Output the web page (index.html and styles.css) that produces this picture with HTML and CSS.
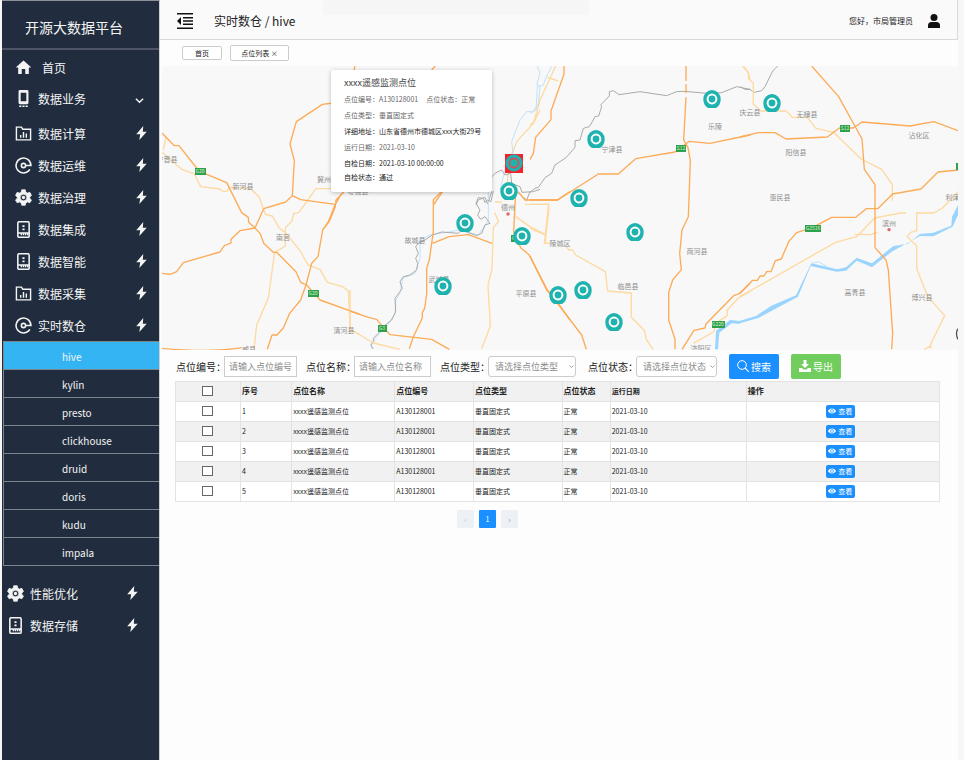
FILE: index.html
```html
<!DOCTYPE html>
<html lang="zh-CN">
<head>
<meta charset="utf-8">
<title>开源大数据平台</title>
<link rel="stylesheet" href="styles.css">
</head>
<body>
<svg class="sprite" aria-hidden="true">
  <symbol id="i-home" viewBox="0 0 24 24"><path d="M9.500 21v-7h5v7h5v-9h3.500L12 2 1 12h3.500v9z"/></symbol>
  <symbol id="i-phone" viewBox="0 0 24 24"><path fill-rule="evenodd" d="M7 0h10a2 2 0 0 1 2 2v16a2 2 0 0 1-2 2H7a2 2 0 0 1-2-2V2a2 2 0 0 1 2-2zM8 4v12h8V4zM6 22h3v2H6zM10.500 22h3v2h-3zM15 22h3v2h-3z"/></symbol>
  <symbol id="i-folder" viewBox="0 0 24 24"><path fill="none" stroke="currentColor" stroke-width="2" d="M2 3h7l2 3h11v15H2z"/><path d="M7 14h2v4H7zM11 10h2v8h-2zM15 12h2v6h-2z"/></symbol>
  <symbol id="i-orbit" viewBox="0 0 24 24"><g fill="none" stroke="currentColor" stroke-width="2.200"><path d="M21 17.500A10.500 10.500 0 1 1 22.500 12H15"/><circle cx="12" cy="12" r="3"/></g></symbol>
  <symbol id="i-gear" viewBox="0 0 24 24"><path stroke="currentColor" stroke-linejoin="round" fill-rule="evenodd" d="M9.500 1h5l.8 3.500 2.200 1.300L21 4.700l2.300 4.300-2.500 2.500v1.500l2.500 2.500L21 19.500l-3.500-1.200-2.200 1.300-.8 3.400h-5l-.8-3.400-2.200-1.300L3 19.500.7 15.500 3.200 13v-1.500L.7 9 3 4.700l3.500 1.100 2.200-1.300zM12 7.500a4.600 4.600 0 1 0 0 9.200 4.600 4.600 0 0 0 0-9.200z"/><circle cx="12" cy="12" r="2.300"/></symbol>
  <symbol id="i-server" viewBox="0 0 24 24"><rect x="4" y="1" width="16" height="22" rx="2" fill="none" stroke="currentColor" stroke-width="2.200"/><path d="M10.500 6h3v2.500h-3zM10.500 10.500h3V13h-3zM4 16h16v2h-1v2h-2v-2h-1v2h-2v-2h-1v2h-2v-2h-1v2H8v-2H4z"/></symbol>
  <symbol id="i-bolt" viewBox="0 0 12 16"><path d="M8 0 0 9.500h4.500L3.500 16 12 6.500H7.500z"/></symbol>
  <symbol id="i-eye" viewBox="0 0 16 12"><path fill-rule="evenodd" d="M8 1c3.500 0 6.500 2 8 5-1.500 3-4.500 5-8 5S1.500 9 0 6c1.500-3 4.500-5 8-5zM8 2.500a3.500 3.500 0 1 0 0 7 3.500 3.500 0 0 0 0-7z"/><circle cx="8" cy="6" r="2"/></symbol>
  <symbol id="i-down" viewBox="0 0 10 10"><path d="M1 3l4 4 4-4" fill="none" stroke="currentColor" stroke-width="1.600"/></symbol>
  <symbol id="pin" viewBox="-10 -10 20 20"><path d="M-4 9C-7 7.500-8.700 4-8.700 0A8.700 8.900 0 0 1 8.700 0C8.700 4 7 7.500 4 9z" fill="#1fb3b0"/><circle r="4.400" fill="none" stroke="#fff" stroke-width="2"/></symbol>
</svg>

<aside class="sidebar">
  <h1 class="brand">开源大数据平台</h1>
  <nav>
    <div class="group group-top">
      <a class="item item-home" href="#"><svg class="icon"><use href="#i-home"/></svg>首页</a>
      <a class="item" href="#"><svg class="icon"><use href="#i-phone"/></svg>数据业务<svg class="chev"><use href="#i-down"/></svg></a>
    </div>
    <div class="group">
      <a class="item" href="#"><svg class="icon"><use href="#i-folder"/></svg>数据计算<svg class="bolt"><use href="#i-bolt"/></svg></a>
      <a class="item" href="#"><svg class="icon"><use href="#i-orbit"/></svg>数据运维<svg class="bolt"><use href="#i-bolt"/></svg></a>
      <a class="item" href="#"><svg class="icon"><use href="#i-gear"/></svg>数据治理<svg class="bolt"><use href="#i-bolt"/></svg></a>
      <a class="item" href="#"><svg class="icon"><use href="#i-server"/></svg>数据集成<svg class="bolt"><use href="#i-bolt"/></svg></a>
      <a class="item" href="#"><svg class="icon"><use href="#i-server"/></svg>数据智能<svg class="bolt"><use href="#i-bolt"/></svg></a>
      <a class="item" href="#"><svg class="icon"><use href="#i-folder"/></svg>数据采集<svg class="bolt"><use href="#i-bolt"/></svg></a>
      <a class="item" href="#"><svg class="icon"><use href="#i-orbit"/></svg>实时数仓<svg class="bolt"><use href="#i-bolt"/></svg></a>
    </div>
    <div class="sub">
      <a class="active" href="#">hive</a><a href="#">kylin</a><a href="#">presto</a><a href="#">clickhouse</a>
      <a href="#">druid</a><a href="#">doris</a><a href="#">kudu</a><a href="#">impala</a>
    </div>
    <div class="group group-end">
      <a class="item" href="#"><svg class="icon"><use href="#i-gear"/></svg>性能优化<svg class="bolt"><use href="#i-bolt"/></svg></a>
      <a class="item" href="#"><svg class="icon"><use href="#i-server"/></svg>数据存储<svg class="bolt"><use href="#i-bolt"/></svg></a>
    </div>
  </nav>
</aside>

<main class="main">
  <header class="topbar">
    <button class="fold" aria-label="收起菜单"><svg viewBox="0 0 16 16"><path d="M0 0h16v1.500H0zM6 4h10v1.500H6zM6 7.200h10v1.500H6zM6 10.500h10V12H6zM0 14.500h16V16H0zM4 4v8L0 8z"/></svg></button>
    <span class="crumb">实时数仓 / hive</span>
    <span class="hello">您好，市局管理员</span>
    <svg class="user" viewBox="0 0 12 14"><circle cx="6" cy="3.500" r="3.500"/><path d="M0 14v-2.500Q0 8 3.500 8h5Q12 8 12 11.500V14z"/></svg>
  </header>
  <div class="tabs"><button>首页</button><button class="tab-open">点位列表 ×</button></div>

  <section class="map">
    <svg class="canvas" viewBox="162 66 796 284" preserveAspectRatio="xMidYMid slice">
      <g class="lines" transform="translate(160 60) scale(.33333)">
        <path class="minor" d="M18 230L10 270M6 277L65 328 103 342 122 380 180 387 188 394 200 394 210 382 272 386 298 412 316 463 337 468 357 503 376 518 421 573 444 615 480 628 502 667 548 680 565 693 571 810 600 824M515 386H468L416 458 401 460 396 483 376 503V558L344 577 325 714 290 795 282 868"/>
        <path class="major" d="M6 219L43 257H57L105 318 120 335 200 368 245 458 265 472 266 487 285 504 300 520 311 550 340 577H350L408 635 422 667 440 675 462 700 480 720 600 763M520 129L487 133 409 185 390 252 403 302 397 407 377 426 311 446 285 504 240 512 213 538V549L193 557 180 576 70 608 50 635 31 643 6 640M397 407L422 419 526 433M552 395L528 420 526 440 508 484 488 510 474 590 455 610 438 675 422 720 389 760 370 804 351 825H336L322 868M545 400L525 435 505 485 488 510M6 865Q150 878 245 863"/>
      </g>
      <g class="lines" transform="translate(320 60) scale(.33333)">
        <path class="major" d="M105 18L102 30M346 18L335 30M340 435L368 395"/>
        <path class="minor" d="M660 150L640 190 590 245 570 300 560 380"/>
        <path class="water" d="M652 18L660 40 650 75 660 80 655 130 640 155 620 155 600 180 575 245 580 290 555 330 540 390"/>
        <path class="border" d="M468 435L475 420 495 412 503 432 515 395 505 388 516 350 525 340 545 330 555 345 572 340 575 370 600 380 606 397 640 395 660 388"/>
      </g>
      <g class="lines" transform="translate(350 190) scale(.33333)">
        <path class="water" d="M415 5V90L400 115 385 135 330 120 240 135 210 150V205L195 250 158 265 150 310 138 330 135 370 110 410 65 455V476"/>
        <path class="border" d="M430 3L423 35 412 30 405 38 400 25 385 23 378 40 390 60 383 75 392 88 405 80 420 100 405 105 395 130 380 137 355 128 335 120 325 130 275 126 245 136 225 150 205 160 197 170 205 190 197 205 203 220 200 240 180 255 160 260 150 275 157 295 135 325 137 365 125 390 100 410 85 430 70 445 72 455 62 465 70 477M540 5L530 30 500 5"/>
        <path class="minor" d="M0 300V417L70 459 150 478M434 68L446 95 430 112 426 235 414 285 421 408 395 476M435 36H455M497 80L540 110 586 134M525 43H596L583 160H600"/>
        <path class="major" d="M0 363L55 382 80 388 98 410 120 434 245 448 298 478M274 5L250 29V125L238 210 230 235V312L224 355 217 368V384L190 440 178 476M248 160L297 140 355 134 426 160M497 5L491 125 512 173 537 194 590 300 625 340 660 390M505 5L525 30H622L660 5"/>
      </g>
      <g class="lines" transform="translate(530 60) scale(.33333)">
        <path class="water" d="M66 18L48 52 40 75 22 80 18 150 0 160"/>
        <path class="border" d="M0 397L15 385 25 382 45 353 65 340 75 315 108 293 135 262V242L150 240 160 205 178 200 188 183 195 170 206 168 215 140 212 135 238 108V95L250 92 267 104 330 95 410 107 440 95 465 94 530 100 575 98 600 88 620 80 660 88"/>
        <path class="minor" d="M77 18L30 120 12 185 0 195M52 52L85 63M640 18L656 40 660 60M0 433H56V455L45 550H56M0 505L45 525M110 560L116 570H128L137 585 226 635 233 693 304 699V772L344 812 349 838 369 868M660 695L625 714 592 750V766L565 785 550 816 490 850"/>
        <path class="major" d="M102 18V42L63 153V179L17 232 10 280 0 298M468 18V63M468 72V100M468 112L461 240 474 263 481 302 475 470 456 510 449 580 454 629 428 660 416 698V780L435 838V868M0 420H83L205 342H265L317 296 435 276 478 244 540 250 660 225M0 588L52 690 155 825 169 868M660 670L630 700 611 707 528 792 525 804 492 811 456 868"/>
      </g>
      <g class="lines" transform="translate(740 60) scale(.33333)">
        <path class="river" d="M654 435V465L638 500 580 529 540 528 455 575 396 622 350 602 318 632 290 635 212 618 174 710 55 774 0 790V782L48 768 94 737 168 706 214 610 292 628 318 622 350 593 396 610 460 558 502 552 540 522 580 518 634 497 636 470z"/>
        <path class="water" d="M214 610L235 605 262 620"/>
        <path class="river" d="M0 783L-30 780-72 812-75 868H-66L-62 818-25 790 0 792z"/>
        <path class="border" d="M0 80L15 88 30 88 42 97 65 92 75 80 98 33 113 18"/>
        <path class="minor" d="M8 18L25 37 26 56 40 70V132L62 153H138L157 172H202L228 205 281 217 363 297 425 328 457 374V422M0 710L285 548 350 530 404 474 440 467 482 459H498M344 523L390 524 412 517M654 395L630 420 608 444 582 459H530V512L512 517 502 530 530 558V625L563 710 614 767 572 853V865M553 868L574 857"/>
        <path class="major" d="M215 18L296 110 366 237 373 328 405 374V563L438 600 445 630 458 820 455 868M0 231L55 218H105L138 237 262 231 298 204H340L366 186 510 198 582 185 654 212M0 700L38 661H52L60 648H72L80 635H93L106 602 124 597 146 545 170 518 217 503 275 472H347L379 446H413L458 402 543 387 594 336 654 330"/>
        <circle class="city" cx="447" cy="509" r="5"/>
        <path d="M654 806Q645 820 654 838" fill="none" stroke="#555" stroke-width="4"/>
      </g>
      <circle class="city" cx="508" cy="214" r="1.700"/>
      <g class="badges">
        <rect x="195" y="168" width="11" height="7"/><rect x="308" y="290" width="11" height="7"/><rect x="378" y="325" width="9" height="7"/><rect x="511" y="235" width="9" height="7"/><rect x="676" y="145" width="10" height="7"/><rect x="840" y="125" width="10" height="7"/><rect x="805" y="225" width="16" height="7"/><rect x="712" y="321" width="13" height="7"/><rect x="956" y="163" width="6" height="7"/>
        <g><text x="200" y="173">G20</text><text x="313" y="295">G20</text><text x="382" y="330">G3</text><text x="515" y="240">G3</text><text x="681" y="150">S12</text><text x="845" y="130">S12</text><text x="813" y="230">G2516</text><text x="718" y="326">G220</text></g>
      </g>
      <g class="places">
        <text x="167" y="162">宁晋县</text><text x="243" y="189">新河县</text><text x="283" y="240">南宫</text><text x="324" y="182">冀州</text><text x="344" y="333">清河县</text><text x="249" y="352">威县</text><text x="358" y="194">枣强县</text><text x="415" y="243">故城县</text><text x="439" y="282">武城县</text><text x="508" y="210">德州</text><text x="526" y="296">平原县</text><text x="560" y="246">陵城区</text><text x="612" y="152">宁津县</text><text x="715" y="129">乐陵</text><text x="750" y="115">庆云县</text><text x="697" y="254">商河县</text><text x="628" y="289">临邑县</text><text x="701" y="351">济阳区</text><text x="807" y="117">无棣县</text><text x="796" y="155">阳信县</text><text x="919" y="138">沾化区</text><text x="780" y="200">惠民县</text><text x="956" y="200">利津县</text><text x="889" y="226">滨州</text><text x="855" y="295">高青县</text><text x="922" y="300">博兴县</text>
      </g>
      <rect x="505" y="154" width="18" height="19" fill="#f5222d"/>
      <g>
        <use href="#pin" x="702" y="89" width="20" height="20"/><use href="#pin" x="762" y="93" width="20" height="20"/><use href="#pin" x="586" y="129" width="20" height="20"/><use href="#pin" x="569" y="188" width="20" height="20"/><use href="#pin" x="625" y="222" width="20" height="20"/><use href="#pin" x="455" y="213" width="20" height="20"/><use href="#pin" x="499" y="181" width="20" height="20"/><use href="#pin" x="512" y="226" width="20" height="20"/><use href="#pin" x="433" y="276" width="20" height="20"/><use href="#pin" x="548" y="285" width="20" height="20"/><use href="#pin" x="573" y="280" width="20" height="20"/><use href="#pin" x="604" y="312" width="20" height="20"/>
      </g>
      <circle cx="514" cy="163" r="8.500" fill="#1fb3b0"/><circle cx="514" cy="163" r="4.600" fill="none" stroke="#e5484d" stroke-width="1.600"/>
    </svg>
    <div class="popup">
      <h2>xxxx遥感监测点位</h2>
      <p>点位编号：A130128001<span>点位状态：正常</span></p>
      <p>点位类型：垂直固定式</p>
      <p class="dark">详细地址：山东省德州市德城区xxx大街29号</p>
      <p>运行日期：2021-03-10</p>
      <p class="dark">自检日期：2021-03-10 00:00:00</p>
      <p class="dark">自检状态：通过</p>
    </div>
  </section>

  <form class="filters">
    <div class="field"><label for="code">点位编号：</label><input class="box box-code" id="code" placeholder="请输入点位编号"></div>
    <div class="field"><label for="name">点位名称：</label><input class="box box-name" id="name" placeholder="请输入点位名称"></div>
    <div class="field"><label for="type">点位类型：</label><div class="pick pick-type"><select class="box" id="type"><option>请选择点位类型</option></select><svg><use href="#i-down"/></svg></div></div>
    <div class="field field-state"><label for="state">点位状态：</label><div class="pick pick-state"><select class="box" id="state"><option>请选择点位状态</option></select><svg><use href="#i-down"/></svg></div></div>
    <button type="button" class="btn"><svg viewBox="0 0 12 12"><circle cx="5" cy="5" r="4.300" fill="none" stroke="currentColor"/><path d="M8 8l4 4" stroke="currentColor" stroke-width="1.200"/></svg>搜索</button>
    <button type="button" class="btn btn-green"><svg viewBox="0 0 12 12"><path d="M4.500 0h3v4H10L6 8 2 4h2.500zM0 8h3l1.500 1.500h3L9 8h3v4H0z"/></svg>导出</button>
  </form>

  <table class="grid">
    <colgroup><col class="c1"><col class="c2"><col class="c3"><col class="c4"><col class="c5"><col class="c6"><col class="c7"><col class="c8"></colgroup>
    <thead><tr><th class="mid"><input type="checkbox" aria-label="全选"></th><th>序号</th><th>点位名称</th><th>点位编号</th><th>点位类型</th><th>点位状态</th><th class="small">运行日期</th><th>操作</th></tr></thead>
    <tbody>
      <tr><td class="mid"><input type="checkbox" aria-label="选择 1"></td><td>1</td><td>xxxx遥感监测点位</td><td>A130128001</td><td>垂直固定式</td><td>正常</td><td>2021-03-10</td><td class="act"><button class="view"><svg><use href="#i-eye"/></svg>查看</button></td></tr>
      <tr><td class="mid"><input type="checkbox" aria-label="选择 2"></td><td>2</td><td>xxxx遥感监测点位</td><td>A130128001</td><td>垂直固定式</td><td>正常</td><td>2021-03-10</td><td class="act"><button class="view"><svg><use href="#i-eye"/></svg>查看</button></td></tr>
      <tr><td class="mid"><input type="checkbox" aria-label="选择 3"></td><td>3</td><td>xxxx遥感监测点位</td><td>A130128001</td><td>垂直固定式</td><td>正常</td><td>2021-03-10</td><td class="act"><button class="view"><svg><use href="#i-eye"/></svg>查看</button></td></tr>
      <tr><td class="mid"><input type="checkbox" aria-label="选择 4"></td><td>4</td><td>xxxx遥感监测点位</td><td>A130128001</td><td>垂直固定式</td><td>正常</td><td>2021-03-10</td><td class="act"><button class="view"><svg><use href="#i-eye"/></svg>查看</button></td></tr>
      <tr><td class="mid"><input type="checkbox" aria-label="选择 5"></td><td>5</td><td>xxxx遥感监测点位</td><td>A130128001</td><td>垂直固定式</td><td>正常</td><td>2021-03-10</td><td class="act"><button class="view"><svg><use href="#i-eye"/></svg>查看</button></td></tr>
    </tbody>
  </table>
  <nav class="pager"><button aria-label="上一页" class="off">‹</button><button class="on">1</button><button aria-label="下一页">›</button></nav>
</main>
</body>
</html>
```
FILE: styles.css
```css
* { box-sizing: border-box; }

body {
  margin: 0;
  padding: 0 6px 0 2px;
  min-height: 100vh;
  display: flex;
  background: #f7f7f7;
  color: #222;
  font-family: "Noto Sans CJK SC", sans-serif;
  font-size: 7px;
}

button, input, select { font: inherit; color: inherit; margin: 0; padding: 0; }
svg { fill: currentColor; flex: none; }
a { color: inherit; text-decoration: none; }
.sprite { position: absolute; width: 0; height: 0; }

/* Sidebar */
.sidebar {
  flex: 0 0 158px;
  background: #212d3e;
  color: #f4f4f4;
  border-top: 1px solid #8d9299;
  border-right: 1px solid #d0d0d0;
}
.brand {
  margin: 0 0 2px;
  padding: 8px 0 0 23px;
  height: 49px;
  border-bottom: 2px solid #4d5465;
  font-size: 14px;
  font-weight: 400;
  line-height: 36px;
}
.group { padding: 0 12px 0 13px; }
.item {
  display: flex;
  align-items: center;
  gap: 6px;
  height: 32px;
  font-size: 12px;
}
.item-home { gap: 10px; }
.group-top { padding-bottom: 3px; }
.group-top .item { height: 31px; }
.icon { width: 17px; height: 17px; }
.bolt { width: 11px; height: 14px; margin-left: auto; }
.chev { width: 9px; height: 9px; margin: 3px 3px 0 auto; }
.sub { margin-left: 1px; border: 1px solid #7b858c; border-width: 1px 0 0 1px; }
.sub a {
  display: block;
  height: 28px;
  padding-left: 58px;
  border-bottom: 1px solid #7b858c;
  font-size: 10px;
  line-height: 29px;
}
.sub .active { background: #34b4f2; }
.group-end { padding: 11px 21px 0 5px; }

/* Header and tabs */
.main { flex: 1; min-width: 0; background: #fdfdfd; }
.topbar {
  display: flex;
  align-items: center;
  height: 40px;
  padding: 2px 17px 0 17px;
  background: linear-gradient(#f6f6f6, #f6f6f6) 163px 0 / 266px 15px no-repeat #fafafa;
  border: 1px solid #d9d9d9;
  border-width: 0 1px 1px 0;
}
.fold { width: 16px; height: 16px; border: 0; background: none; color: #111; }
.fold svg { display: block; }
.crumb { margin-left: 21px; font-size: 12px; }
.hello { margin-left: auto; font-size: 8px; }
.user { width: 12px; height: 14px; margin-left: 15px; color: #111; }
.tabs {
  display: flex;
  align-items: center;
  gap: 8px;
  height: 26px;
  padding-left: 22px;
}
.tabs button {
  width: 40px;
  height: 14px;
  border: 1px solid #ccc;
  border-radius: 2px;
  background: #fff;
  line-height: 10px;
}
.tabs .tab-open { width: 59px; height: 16px; }

/* Map */
.map { position: relative; height: 284px; margin-left: 2px; background: #f8f8f8; overflow: hidden; }
.canvas { display: block; width: 100%; height: 100%; }
.lines path { stroke-linejoin: round; }
.lines .major, .lines .minor, .lines .water, .lines .border { fill: none; }
.lines .major { stroke: #fdab57; stroke-width: 4; }
.lines .minor { stroke: #fed9a0; stroke-width: 4; }
.lines .water { stroke: #bfe2fa; stroke-width: 3; }
.lines .border { stroke: #aaa; stroke-width: 3; }
.lines .river { fill: #9bd5fd; }
.city { fill: #e06666; }
.badges { fill: #2fa04c; }
.badges text { fill: #d9f2c8; font-size: 5px; text-anchor: middle; }
.places { fill: #8f8f8f; font-size: 7px; text-anchor: middle; }
.popup {
  position: absolute;
  left: calc(50% - 229px);
  top: 4px;
  width: 161px;
  height: 122px;
  padding: 5px 0 0 13px;
  background: #fff;
  border-radius: 2px;
  box-shadow: 0 1px 4px rgba(0, 0, 0, .25);
  color: #666;
  white-space: nowrap;
}
.popup h2 { margin: 0; font-size: 9px; font-weight: 400; line-height: 16px; color: #444; }
.popup p { margin: 0; line-height: 16px; }
.popup p:last-child { line-height: 13px; }
.popup span { margin-left: 8px; }
.popup .dark { color: #222; }

/* Filters */
.filters { display: flex; align-items: center; gap: 9px; height: 31px; padding: 1px 0 0 16px; }
.field { display: flex; align-items: center; font-size: 10px; }
.field label { width: 48px; white-space: nowrap; }
.field-state { margin: 0 3px; }
.box {
  height: 21px;
  padding: 0 4px;
  border: 1px solid #ccc;
  background: #fff;
  color: #8c8c8c;
  font-size: 9px;
}
.box::placeholder { color: #8c8c8c; }
.box-code { width: 73px; }
.box-name { width: 77px; }
.pick { display: grid; align-items: center; }
.pick > * { grid-area: 1 / 1; }
.pick select { width: 100%; padding: 0 6px; border-radius: 3px; appearance: none; }
.pick svg { width: 5px; height: 5px; margin-right: 2px; justify-self: end; color: #888; pointer-events: none; }
.pick-type { width: 88px; }
.pick-state { width: 81px; }
.btn {
  display: flex;
  align-items: center;
  justify-content: center;
  gap: 2px;
  width: 50px;
  height: 25px;
  border: 0;
  border-radius: 2px;
  background: #1a8fff;
  color: #fff;
  font-size: 10px;
}
.btn svg { width: 12px; height: 12px; }
.btn-green { background: #72cd5f; margin-left: 3px; }

/* Table */
.grid {
  width: calc(100% - 33px);
  margin-left: 15px;
  border-collapse: collapse;
  table-layout: fixed;
  background: #fff;
}
.grid th, .grid td {
  height: 20px;
  padding: 0 1px 1px;
  border: 1px solid #e3e3e3;
  text-align: left;
  line-height: 10px;
}
.grid th { font-size: 8px; font-weight: 700; }
.grid .small { font-size: 7px; }
.grid thead tr, .grid tbody tr:nth-child(even) { background: #f1f1f1; }
.grid .act { padding-right: 6px; }
.grid input {
  display: block;
  width: 11px;
  height: 10px;
  margin: 0 auto;
  border: 1px solid #666;
  background: #fff;
  appearance: none;
}
.c1 { width: 8.5%; }
.c2 { width: 6.7%; }
.c3 { width: 13.5%; }
.c4 { width: 10.3%; }
.c5 { width: 11.6%; }
.c6 { width: 6.3%; }
.c7 { width: 17.8%; }
.c8 { width: 25.3%; }
.view {
  display: flex;
  align-items: center;
  justify-content: center;
  gap: 2px;
  width: 29px;
  height: 13px;
  margin: 0 auto;
  border: 0;
  border-radius: 2px;
  background: #1a8fff;
  color: #fff;
}
.view svg { width: 8px; height: 6px; }

/* Pagination */
.pager { display: flex; gap: 5px; padding: 8px 0 0 297px; }
.pager button { width: 17px; height: 18px; border: 0; border-radius: 1px; background: #edf1f5; color: #777; }
.pager .off { color: #bbb; }
.pager .on { background: #1a8fff; color: #fff; }
```
